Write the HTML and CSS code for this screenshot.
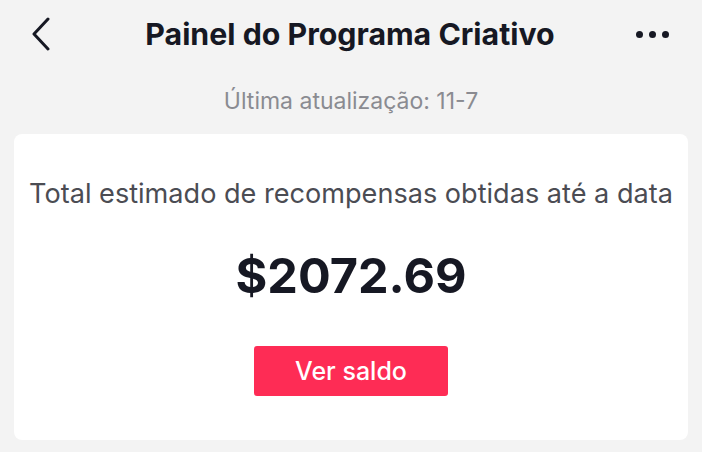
FILE: index.html
```html
<!DOCTYPE html>
<html lang="pt">
<head>
    <meta charset="UTF-8">
    <meta name="viewport" content="width=device-width, initial-scale=1.0">
    <title>Painel do Programa Criativo</title>
    <link rel="stylesheet" href="styles.css">
</head>
<body>
    <header class="top-bar">
        <button class="icon-btn back" aria-label="Voltar">
            <svg width="20" height="34" viewBox="0 0 20 34">
                <path d="M17 2 L3 17 L17 32" fill="none" stroke="#161823" stroke-width="3" stroke-linecap="round" stroke-linejoin="round"/>
            </svg>
        </button>
        <h1 class="title">Painel do Programa Criativo</h1>
        <button class="icon-btn more" aria-label="Mais">
            <span class="dot"></span><span class="dot"></span><span class="dot"></span>
        </button>
    </header>

    <p class="updated">Última atualização: 11-7</p>

    <div class="card">
        <p class="card-label">Total estimado de recompensas obtidas até a data</p>
        <p class="amount">$2072.69</p>
        <button class="btn">Ver saldo</button>
    </div>
</body>
</html>
```

FILE: styles.css
```css
body {
    font-family: Inter, Roboto, sans-serif;
    margin: 0;
    background-color: #f3f3f3;
    color: #161823;
}
.top-bar {
    height: 68px;
    display: flex;
    align-items: center;
    justify-content: space-between;
    padding: 0 33px 0 31px;
}
.icon-btn {
    width: 40px;
    background: none;
    border: none;
    padding: 0;
    display: flex;
    align-items: center;
    cursor: pointer;
}
.more {
    justify-content: flex-end;
    gap: 6px;
}
.dot {
    width: 7px;
    height: 7px;
    border-radius: 50%;
    background-color: #161823;
}
.title {
    margin: 0;
    font-size: 30.3px;
    font-weight: 700;
}
.updated {
    margin: 0;
    height: 66px;
    line-height: 66px;
    text-align: center;
    font-size: 23px;
    color: #8a8b91;
}
.card {
    margin: 0 14px;
    height: 306px;
    box-sizing: border-box;
    background-color: #fff;
    border-radius: 8px;
    display: flex;
    flex-direction: column;
    align-items: center;
    padding-top: 43px;
}
.card-label {
    margin: 0;
    font-size: 27.1px;
    line-height: 34px;
    color: #4b4c53;
}
.amount {
    margin: 35px 0 0;
    font-size: 48.6px;
    font-weight: 700;
    line-height: 60px;
}
.btn {
    margin-top: 40px;
    width: 194px;
    height: 50px;
    background-color: #fe2c55;
    color: #fff;
    border: none;
    border-radius: 3px;
    font-family: inherit;
    font-size: 25px;
    font-weight: 500;
    cursor: pointer;
}
```
